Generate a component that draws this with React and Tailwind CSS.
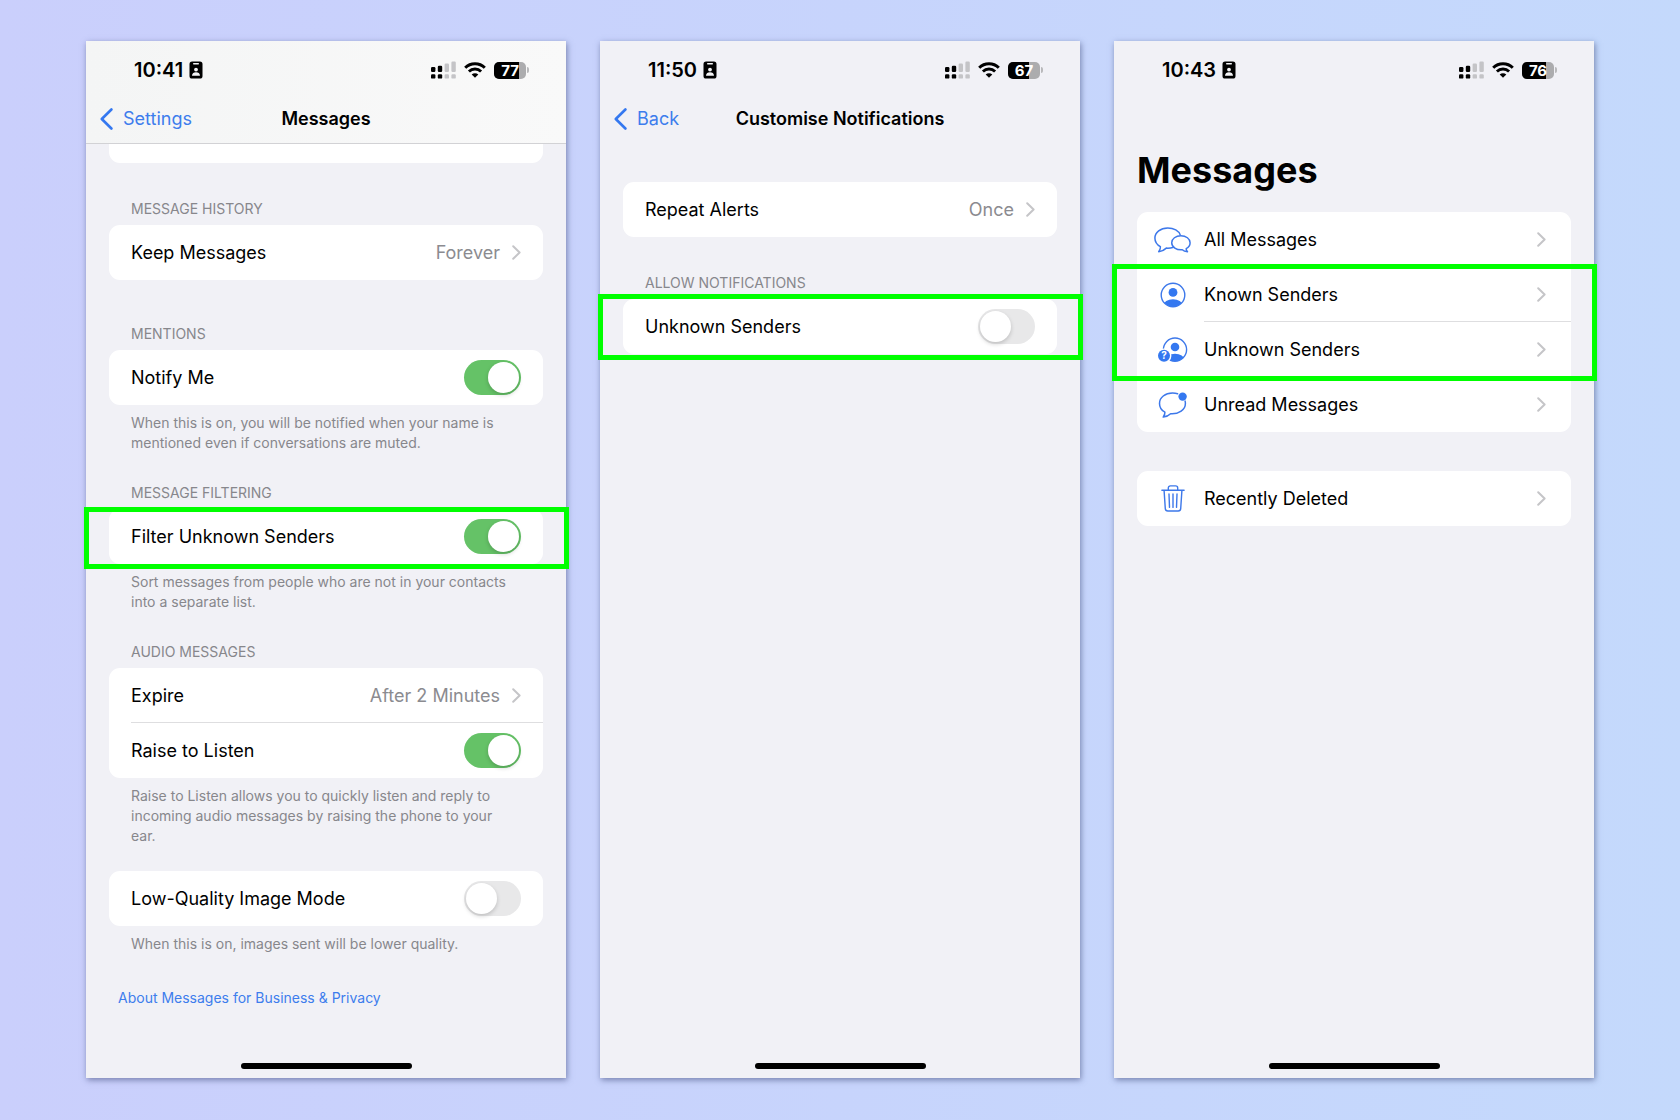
import { useId, useState } from "react";

const Chevron = () => (
  <svg width="9" height="15" viewBox="0 0 9 15" fill="none" className="shrink-0" aria-hidden="true">
    <path d="M1.2 1.2L7.6 7.5L1.2 13.8" stroke="#c5c5c8" strokeWidth="2" strokeLinecap="round" strokeLinejoin="round" />
  </svg>
);

const BadgeIcon = () => (
  <svg width="14" height="18" viewBox="0 0 14 18" aria-hidden="true">
    <rect x="0.5" y="0.5" width="13" height="17" rx="2.6" fill="#000" />
    <rect x="4" y="2" width="6" height="1.4" rx="0.7" fill="#f5f5f7" />
    <circle cx="7" cy="8.6" r="1.9" fill="#f5f5f7" />
    <path d="M3 14.8C3 12.4 4.8 11.3 7 11.3C9.2 11.3 11 12.4 11 14.8Z" fill="#f5f5f7" />
  </svg>
);

const SignalIcon = () => (
  <svg width="25" height="18" viewBox="0 0 25 18" aria-hidden="true">
    <g fill="#000">
      <rect x="0" y="6" width="4.4" height="5" rx="1.2" />
      <rect x="0" y="13.2" width="4.4" height="4.4" rx="1.2" />
      <rect x="6.8" y="4.8" width="4.4" height="6.2" rx="1.2" />
      <rect x="6.8" y="13.2" width="4.4" height="4.4" rx="1.2" />
    </g>
    <g fill="#c4c4c7">
      <rect x="13.6" y="2.6" width="4.4" height="8.4" rx="1.2" />
      <rect x="13.6" y="13.2" width="4.4" height="4.4" rx="1.2" />
      <rect x="20.4" y="0.6" width="4.4" height="10.4" rx="1.2" />
      <rect x="20.4" y="13.2" width="4.4" height="4.4" rx="1.2" />
    </g>
  </svg>
);

const WifiIcon = () => (
  <svg width="22" height="16" viewBox="0 0 22 16" fill="none" aria-hidden="true">
    <path d="M1.2 5.8C6.6 0.5 15.4 0.5 20.8 5.8" stroke="#000" strokeWidth="3" />
    <path d="M4.9 9.5C8.3 6.2 13.7 6.2 17.1 9.5" stroke="#000" strokeWidth="2.9" />
    <path d="M11 15.8L7.7 12.5C9.5 10.8 12.5 10.8 14.3 12.5Z" fill="#000" />
  </svg>
);

const BubblesIcon = () => (
  <svg width="37" height="26" viewBox="0 0 37 26" fill="none" stroke="#3d78ea" strokeWidth="1.5" strokeLinejoin="round" aria-hidden="true">
    <path d="M26.3 8C24.9 3.8 19.8 0.9 13.8 0.9C6.6 0.9 0.9 5.3 0.9 11C0.9 14.7 3 17.8 6.4 19.6C6.6 21.2 6 23 4.7 24.7C8 24.3 10.6 22.8 12.3 21.1C14.6 21.3 17.2 21 19.5 20.2" />
    <path d="M26.9 8.7C32 8.7 36.1 11.8 36.1 15.7C36.1 18.2 34.6 20.4 32.2 21.6C32.1 22.8 32.6 23.8 33.5 24.8C31.2 24.6 29.4 23.8 28.3 22.7C22.5 23.2 17.7 20.1 17.7 15.7C17.7 11.8 21.8 8.7 26.9 8.7Z" />
  </svg>
);

const PersonIcon = () => {
  const id = useId();
  return (
    <svg width="26" height="26" viewBox="0 0 26 26" fill="none" aria-hidden="true">
      <clipPath id={id}>
        <circle cx="13" cy="13" r="11.6" />
      </clipPath>
      <circle cx="13" cy="13" r="11.8" stroke="#3d78ea" strokeWidth="1.4" />
      <circle cx="13" cy="10.4" r="4.4" fill="#3478f0" />
      <ellipse cx="13" cy="23.4" rx="9.6" ry="6.2" fill="#3478f0" clipPath={`url(#${id})`} />
    </svg>
  );
};

const UnknownPersonIcon = () => {
  const id = useId();
  return (
    <svg width="31" height="26" viewBox="0 0 31 26" fill="none" aria-hidden="true">
      <clipPath id={id}>
        <circle cx="18" cy="12.6" r="11.4" />
      </clipPath>
      <circle cx="18" cy="12.6" r="11.6" stroke="#3d78ea" strokeWidth="1.4" />
      <circle cx="18" cy="10" r="4.3" fill="#3478f0" />
      <ellipse cx="18" cy="22.8" rx="9.4" ry="6" fill="#3478f0" clipPath={`url(#${id})`} />
      <circle cx="7" cy="18.8" r="7.4" fill="#fff" />
      <circle cx="7" cy="18.8" r="6" fill="#3478f0" />
      <text x="7" y="22.4" fill="#fff" fontSize="10" fontWeight="700" textAnchor="middle">?</text>
    </svg>
  );
};

const UnreadIcon = () => (
  <svg width="30" height="26" viewBox="0 0 30 26" fill="none" aria-hidden="true">
    <path
      d="M19.6 1.7C18 1.2 16.3 1 14.5 1C7.2 1 1.5 5.6 1.5 11.4C1.5 15.2 3.6 18.4 6.9 20.2C7 21.9 6.3 23.5 5.2 25.1C8.7 24.6 11 23.3 12.6 21.7C21 22.3 27.4 17.6 27.4 11.4C27.4 10.6 27.3 9.8 27.1 9.1"
      stroke="#3d78ea" strokeWidth="1.5" strokeLinejoin="round" strokeLinecap="round"
    />
    <circle cx="24.6" cy="4.6" r="4.2" fill="#3478f0" />
  </svg>
);

const TrashIcon = () => (
  <svg width="24" height="27" viewBox="0 0 24 27" fill="none" stroke="#3d78ea" strokeWidth="1.4" strokeLinecap="round" strokeLinejoin="round" aria-hidden="true">
    <path d="M0.9 5.3H23.1" />
    <path d="M7.3 5.1V3C7.3 1.7 8.1 0.9 9.4 0.9H14.6C15.9 0.9 16.7 1.7 16.7 3V5.1" />
    <path d="M3.1 5.6L4.3 23.6C4.4 25.1 5.3 26 6.8 26H17.2C18.7 26 19.6 25.1 19.7 23.6L20.9 5.6" />
    <path d="M8 9L8.5 22.4M12 9V22.4M16 9L15.5 22.4" />
  </svg>
);

const StatusBar = ({ time, battery }) => (
  <div className="flex items-center justify-between pt-0.5 pl-[48px] pr-[37px] h-14">
    <div className="flex items-center gap-[6px]">
      <span className="text-[20px] leading-6 font-semibold">{time}</span>
      <BadgeIcon />
    </div>
    <div className="flex items-center gap-2">
      <SignalIcon />
      <WifiIcon />
      <div className="flex items-center gap-px">
        <div className="relative w-8 h-[17px] rounded-[5px] bg-[#acacae] overflow-hidden">
          <div className="h-full bg-black" style={{ width: `${battery}%` }} />
          <span className="absolute inset-0 text-center text-white text-[15px] leading-[17px] font-bold">{battery}</span>
        </div>
        <div className="w-[2px] h-[6px] rounded-r-full bg-[#b9b9bb]" />
      </div>
    </div>
  </div>
);

const NavBar = ({ back, title }) => (
  <div className="grid grid-cols-[1fr_auto_1fr] items-center h-11 px-[14px]">
    <button className="flex items-center gap-[10px] text-[#3d7ded] text-[18px] leading-6 cursor-pointer">
      <svg width="13" height="22" viewBox="0 0 13 22" fill="none" aria-hidden="true">
        <path d="M11.4 1.5L1.8 11L11.4 20.5" stroke="#3478f0" strokeWidth="2.6" strokeLinecap="round" strokeLinejoin="round" />
      </svg>
      {back}
    </button>
    <h1 className="text-[18px] leading-6 font-semibold">{title}</h1>
  </div>
);

const Phone = ({ children }) => (
  <section className="relative flex flex-col bg-[#f1f1f6] shadow-[1px_2px_6px_rgba(50,60,110,0.55)]">
    {children}
    <div className="mt-auto mb-[9px] mx-auto w-[171px] h-[6px] rounded-full bg-black" />
  </section>
);

const Highlight = ({ className }) => (
  <div className={`absolute -left-[25px] -right-[26px] border-[5px] border-[#00ff00] pointer-events-none ${className}`} />
);

const Label = ({ children }) => (
  <h2 className="pl-[22px] mb-[6px] text-[14px] leading-5 text-[#87878c] uppercase">{children}</h2>
);

const Footnote = ({ children }) => (
  <p className="pl-[22px] pr-[30px] mt-2 text-[14px] leading-5 text-[#87878c]">{children}</p>
);

const Card = ({ children }) => (
  <div className="rounded-[11px] bg-white">{children}</div>
);

const ValueRow = ({ title, value }) => (
  <button className="flex items-center w-full h-[55px] px-[22px] text-[18px] leading-6 cursor-pointer">
    <span className="mr-auto">{title}</span>
    <span className="mr-3 text-[#8b8b90]">{value}</span>
    <Chevron />
  </button>
);

const ToggleRow = ({ title, defaultOn = false }) => {
  const [on, setOn] = useState(defaultOn);
  return (
    <label className="flex items-center justify-between h-[55px] px-[22px] text-[18px] leading-6">
      {title}
      <input
        type="checkbox"
        checked={on}
        onChange={e => setOn(e.target.checked)}
        className="appearance-none w-[57px] h-[35px] p-[2px] rounded-full bg-[#e8e8e9] checked:bg-[#65c267] cursor-pointer before:block before:size-[31px] before:rounded-full before:bg-white before:shadow-[0_2px_4px_rgba(0,0,0,0.18)] checked:before:ml-[22px]"
      />
    </label>
  );
};

const FolderRow = ({ title, icon }) => (
  <button className="flex items-center w-full h-[55px] pl-[17px] pr-[25px] text-[18px] leading-6 cursor-pointer">
    <span className="flex justify-center w-[37px] mr-[13px]">{icon}</span>
    <span className="mr-auto">{title}</span>
    <Chevron />
  </button>
);

const SettingsScreen = () => (
  <Phone>
    <header className="pb-0.5 bg-linear-to-r from-[#f4f5f5] to-[#f9f9f9] border-b border-[#d2d2d5]">
      <StatusBar time="10:41" battery={77} />
      <NavBar back="Settings" title="Messages" />
    </header>
    <div className="px-[23px]">
      <div className="h-[19px] rounded-b-[11px] bg-white" />
      <div className="mt-9">
        <Label>Message History</Label>
        <Card>
          <ValueRow title="Keep Messages" value="Forever" />
        </Card>
      </div>
      <div className="mt-11">
        <Label>Mentions</Label>
        <Card>
          <ToggleRow title="Notify Me" defaultOn />
        </Card>
        <Footnote>When this is on, you will be notified when your name is mentioned even if conversations are muted.</Footnote>
      </div>
      <div className="mt-[30px]">
        <Label>Message Filtering</Label>
        <div className="relative">
          <Card>
            <ToggleRow title="Filter Unknown Senders" defaultOn />
          </Card>
          <Highlight className="-top-[2px] -bottom-[5px]" />
        </div>
        <Footnote>Sort messages from people who are not in your contacts into a separate list.</Footnote>
      </div>
      <div className="mt-[30px]">
        <Label>Audio Messages</Label>
        <Card>
          <ValueRow title="Expire" value="After 2 Minutes" />
          <div className="-mt-px ml-[22px] h-px bg-[#dedee0]" />
          <ToggleRow title="Raise to Listen" defaultOn />
        </Card>
        <Footnote>Raise to Listen allows you to quickly listen and reply to incoming audio messages by raising the phone to your ear.</Footnote>
      </div>
      <div className="mt-[25px]">
        <Card>
          <ToggleRow title="Low-Quality Image Mode" />
        </Card>
        <Footnote>When this is on, images sent will be lower quality.</Footnote>
      </div>
      <a href="#privacy" className="block mt-[34px] pl-[9px] text-[14px] leading-5 text-[#3d7ded]">
        About Messages for Business &amp; Privacy
      </a>
    </div>
  </Phone>
);

const NotificationsScreen = () => (
  <Phone>
    <header>
      <StatusBar time="11:50" battery={67} />
      <NavBar back="Back" title="Customise Notifications" />
    </header>
    <div className="px-[23px] pt-[41px]">
      <Card>
        <ValueRow title="Repeat Alerts" value="Once" />
      </Card>
      <div className="mt-9">
        <Label>Allow Notifications</Label>
        <div className="relative">
          <Card>
            <ToggleRow title="Unknown Senders" />
          </Card>
          <Highlight className="-top-[5px] -bottom-[6px]" />
        </div>
      </div>
    </div>
  </Phone>
);

const FoldersScreen = () => (
  <Phone>
    <StatusBar time="10:43" battery={76} />
    <div className="px-[23px] pt-[49px]">
      <h1 className="mb-[18px] text-[36px] leading-[48px] font-bold">Messages</h1>
      <Card>
        <FolderRow title="All Messages" icon={<BubblesIcon />} />
        <div className="relative">
          <FolderRow title="Known Senders" icon={<PersonIcon />} />
          <div className="-mt-px ml-[67px] h-px bg-[#dedee0]" />
          <FolderRow title="Unknown Senders" icon={<UnknownPersonIcon />} />
          <Highlight className="-top-[3px] -bottom-1" />
        </div>
        <FolderRow title="Unread Messages" icon={<UnreadIcon />} />
      </Card>
      <div className="mt-[39px]">
        <Card>
          <FolderRow title="Recently Deleted" icon={<TrashIcon />} />
        </Card>
      </div>
    </div>
  </Phone>
);

const App = () => (
  <main className="grid grid-cols-3 gap-[34px] min-h-screen px-[86px] pt-[41px] pb-[42px] bg-linear-to-r from-[#cacffc] to-[#c4d9fc] font-['Inter',sans-serif] text-black">
    <SettingsScreen />
    <NotificationsScreen />
    <FoldersScreen />
  </main>
);

export default App;
